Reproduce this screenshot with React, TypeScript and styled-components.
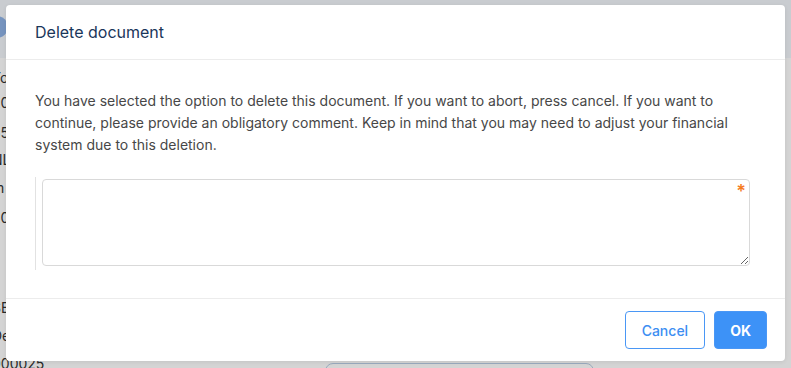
import styled, { createGlobalStyle } from "styled-components";

const GlobalStyle = createGlobalStyle`
  html, body {
    margin: 0;
    padding: 0;
    width: 791px;
    height: 368px;
    overflow: hidden;
    font-family: Inter, "Noto Sans", "Liberation Sans", sans-serif;
  }
`;

const Page = styled.div`
  position: relative;
  width: 791px;
  height: 368px;
  background: #ffffff;
  overflow: hidden;
`;

const PageHeader = styled.div`
  height: 58px;
  background: #f2f6fb;
  display: flex;
  align-items: center;
`;

const Avatar = styled.div`
  width: 22px;
  height: 22px;
  border-radius: 50%;
  background: #8fb3e6;
  margin-left: -14px;
  margin-top: -4px;
`;

const PageList = styled.div`
  display: flex;
  flex-direction: column;
  padding-top: 10px;
  margin-left: -8px;
  color: #333;
  font-size: 14px;
`;

const PageLine = styled.div<{ $gap: number }>`
  height: ${(p) => p.$gap}px;
  line-height: 20px;
  white-space: nowrap;
`;

const PageField = styled.div`
  position: absolute;
  left: 325px;
  top: 363px;
  width: 267px;
  height: 30px;
  border: 1px solid #b9cde4;
  border-radius: 8px;
`;

const Overlay = styled.div`
  position: absolute;
  inset: 0;
  background: rgba(0, 0, 0, 0.17);
`;

const Modal = styled.div`
  position: absolute;
  left: 6px;
  top: 5px;
  width: 779px;
  height: 356px;
  background: #ffffff;
  border-radius: 4px;
  display: flex;
  flex-direction: column;
  box-shadow: 0 1px 4px rgba(0, 0, 0, 0.08);
`;

const Header = styled.div`
  height: 55px;
  box-sizing: border-box;
  padding: 0 29px;
  display: flex;
  align-items: center;
  border-bottom: 1px solid #ececec;
`;

const Title = styled.h2`
  margin: 0;
  font-size: 16px;
  font-weight: 400;
  color: #1a365a;
`;

const Body = styled.div`
  flex: 1;
  padding: 30px 29px 28px 29px;
  border-bottom: 1px solid #ececec;
`;

const Message = styled.p`
  margin: 0;
  font-size: 14px;
  line-height: 22px;
  color: #474747;
`;

const FieldWrap = styled.div`
  margin-top: 21px;
  border-left: 1px solid #e2e2e2;
  padding: 2px 6px 4px 6px;
  position: relative;
`;

const CommentBox = styled.textarea`
  display: block;
  width: 100%;
  height: 87px;
  box-sizing: border-box;
  border: 1px solid #d9d9d9;
  border-radius: 4px;
  resize: vertical;
  font-family: inherit;
  font-size: 14px;
  outline: none;
`;

const Required = styled.span`
  position: absolute;
  top: 4px;
  right: 10px;
  color: #f57c1f;
  font-size: 18px;
  font-weight: 600;
`;

const Footer = styled.div`
  height: 62px;
  box-sizing: border-box;
  padding: 0 18px;
  display: flex;
  align-items: center;
  justify-content: flex-end;
  gap: 9px;
`;

const Button = styled.button<{ $primary?: boolean }>`
  height: 38px;
  padding: 0 ${(p) => (p.$primary ? 15 : 16)}px;
  border-radius: 4px;
  font-family: inherit;
  font-size: 14px;
  font-weight: ${(p) => (p.$primary ? 700 : 500)};
  border: 1px solid #4a97f5;
  background: ${(p) => (p.$primary ? "#3d92f7" : "#ffffff")};
  color: ${(p) => (p.$primary ? "#ffffff" : "#3d8ef2")};
  cursor: pointer;
`;

const pageLines: [string, number][] = [
  ["Tota", 25],
  ["2022", 30],
  [" 55", 27],
  ["NL", 28],
  ["m", 30],
  ["2022", 90],
  ["SE", 28],
  ["Dec", 28],
  ["000025", 26],
];

export default function App() {
  return (
    <>
      <GlobalStyle />
      <Page>
        <PageHeader>
          <Avatar />
        </PageHeader>
        <PageList>
          {pageLines.map(([t, h], i) => (
            <PageLine key={i} $gap={h}>
              {t}
            </PageLine>
          ))}
        </PageList>
        <PageField />
        <Overlay />
        <Modal>
          <Header>
            <Title>Delete document</Title>
          </Header>
          <Body>
            <Message>
              You have selected the option to delete this document. If you want
              to abort, press cancel. If you want to continue, please provide an
              obligatory comment. Keep in mind that you may need to adjust your
              financial system due to this deletion.
            </Message>
            <FieldWrap>
              <CommentBox />
              <Required>*</Required>
            </FieldWrap>
          </Body>
          <Footer>
            <Button>Cancel</Button>
            <Button $primary>OK</Button>
          </Footer>
        </Modal>
      </Page>
    </>
  );
}
